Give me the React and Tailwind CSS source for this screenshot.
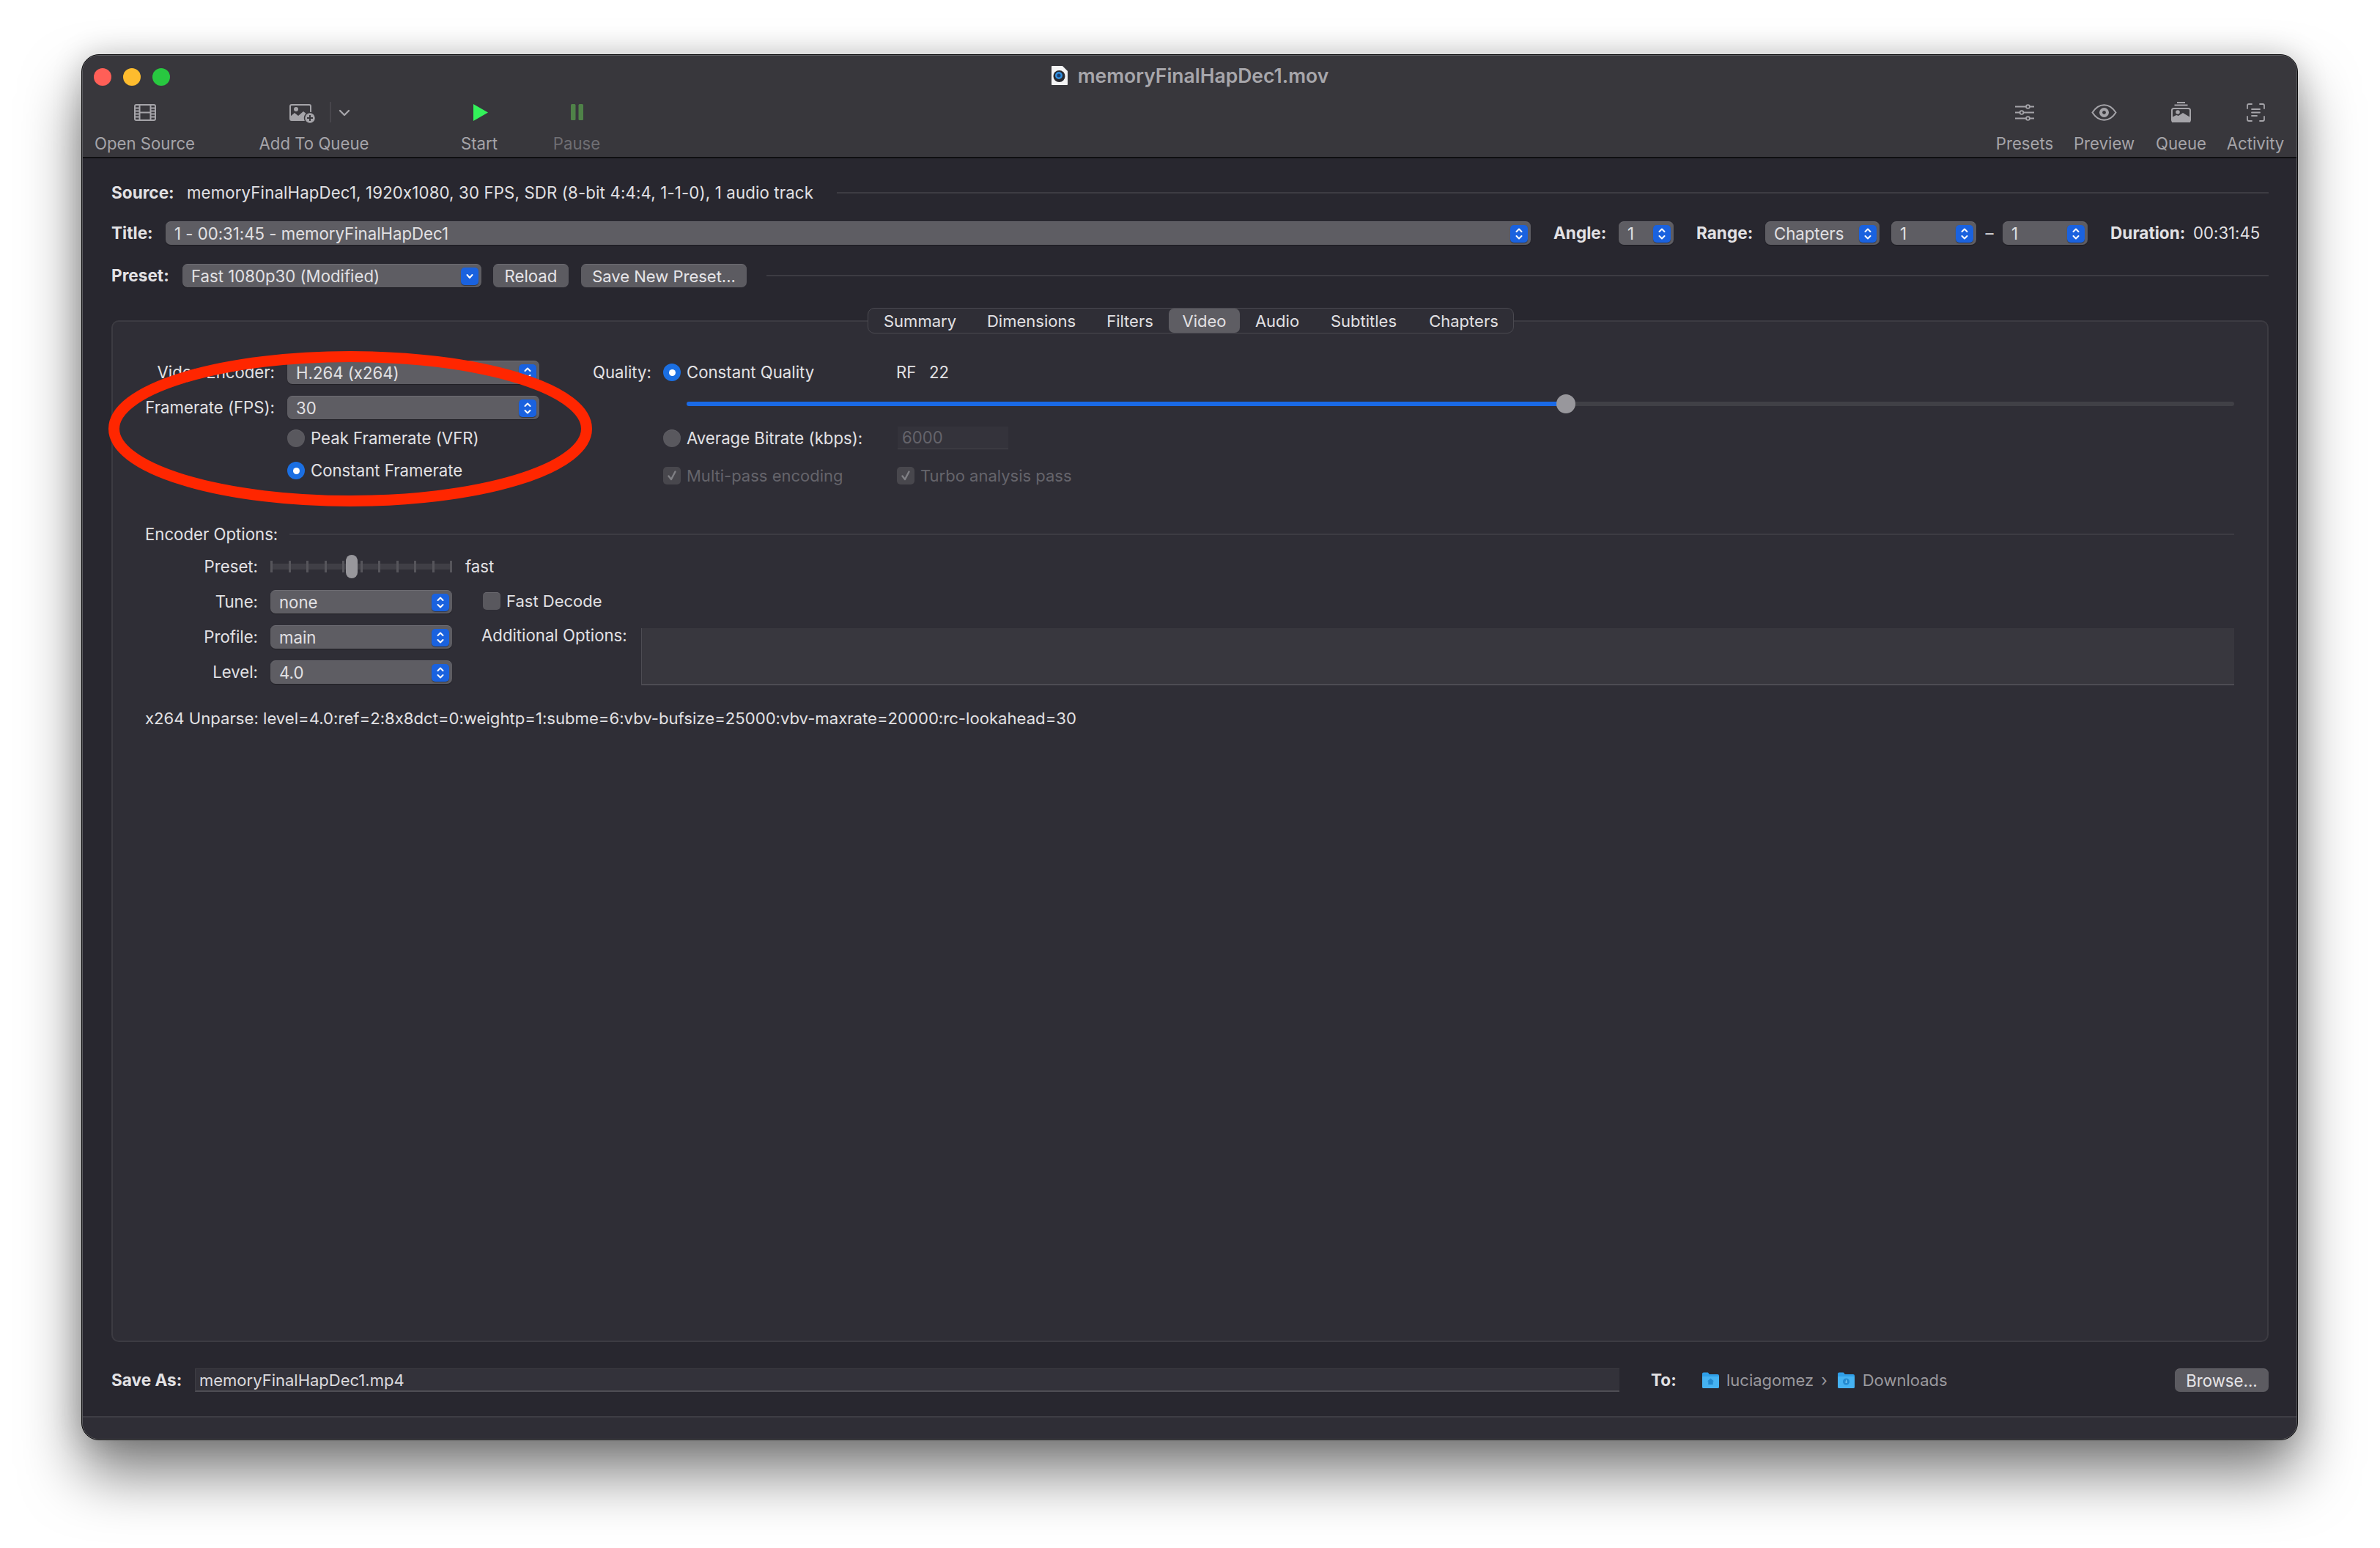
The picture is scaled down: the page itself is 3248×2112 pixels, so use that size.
const FONT = "font-['Inter','Liberation_Sans',sans-serif]";
const BOLD = 'font-bold text-[22.6px]';

const TABS = [
  { label: 'Summary', w: 'w-[141px]' },
  { label: 'Dimensions', w: 'w-[163px]' },
  { label: 'Filters', w: 'w-[106px]' },
  { label: 'Video', w: 'w-[97px]', active: true },
  { label: 'Audio', w: 'w-[102px]' },
  { label: 'Subtitles', w: 'w-[134px]' },
  { label: 'Chapters', w: 'w-[139px]' },
];

const TICKS = [0, 1, 2, 3, 4, 5, 6, 7, 8, 9, 10];

function UpDown() {
  return (
    <svg width="12" height="18" viewBox="0 0 12 18" fill="none" stroke="#fff" strokeWidth="2" strokeLinecap="round" strokeLinejoin="round">
      <path d="M2.5 6 6 2.5 9.5 6" />
      <path d="M2.5 12 6 15.5 9.5 12" />
    </svg>
  );
}

function Select({ text, className = '', single = false, textClass = '' }) {
  return (
    <div className={`h-[32px] flex items-center rounded-[7px] bg-[#5e5d63] border-t border-[#6d6c72] shadow-[0_1px_1px_rgba(0,0,0,0.3)] pl-[12px] pr-[4px] shrink-0 ${className}`}>
      <span className={`flex-1 text-[#e2e1e4] whitespace-nowrap ${textClass}`}>{text}</span>
      <div className="w-[24px] h-[24px] rounded-[5px] bg-[#1a62df] flex items-center justify-center shadow-[0_1px_1px_rgba(0,0,0,0.4)]">
        {single ? (
          <svg width="12" height="10" viewBox="0 0 12 10" fill="none" stroke="#fff" strokeWidth="2" strokeLinecap="round" strokeLinejoin="round">
            <path d="M2.5 3 6 7 9.5 3" />
          </svg>
        ) : <UpDown />}
      </div>
    </div>
  );
}

function Radio({ on }) {
  if (on) {
    return (
      <div className="w-[24px] h-[24px] rounded-full bg-[#1b6fe2] flex items-center justify-center shrink-0">
        <div className="w-[9px] h-[9px] rounded-full bg-white" />
      </div>
    );
  }
  return <div className="w-[24px] h-[24px] rounded-full bg-[#59585e] border-t border-[#6a696f] shrink-0" />;
}

function CheckOff() {
  return (
    <div className="w-[24px] h-[24px] rounded-[5px] bg-[#48474d] flex items-center justify-center shrink-0">
      <svg width="16" height="16" viewBox="0 0 16 16" fill="none" stroke="#808085" strokeWidth="2.4" strokeLinecap="round" strokeLinejoin="round">
        <path d="M3.5 8.5 7 13 12.5 2.5" />
      </svg>
    </div>
  );
}

function Button({ children, className = '' }) {
  return (
    <div className={`h-[32px] flex items-center justify-center rounded-[7px] bg-[#5c5b61] border-t border-[#6d6c72] text-[#e6e5e8] whitespace-nowrap shrink-0 ${className}`}>
      {children}
    </div>
  );
}

function ToolItem({ label, className = '', dim = false, children }) {
  return (
    <div className={`flex flex-col items-center shrink-0 ${className}`}>
      <div className="h-[30px] flex items-center justify-center">{children}</div>
      <span className={`mt-[15px] leading-[26px] whitespace-nowrap ${dim ? 'text-[#6f6e73]' : 'text-[#a5a4a9]'}`}>{label}</span>
    </div>
  );
}

function FolderIcon({ glyph }) {
  return (
    <svg width="25" height="24" viewBox="0 0 25 24" className="shrink-0">
      <path d="M1 3.5C1 2.4 1.8 1.5 3 1.5h5c1 0 1.5.5 2 1.5l.7 1H22c1.1 0 2 .9 2 2V21c0 1.1-.9 2-2 2H3c-1.1 0-2-.9-2-2Z" fill="#2f9fe8" />
      <path d="M1 7h23v14c0 1.1-.9 2-2 2H3c-1.1 0-2-.9-2-2Z" fill="#45b2f2" />
      {glyph === 'home' ? (
        <path d="M12.5 9.5 8 13.5h1.3V18h6.4v-4.5H17Z" fill="#2389cf" />
      ) : (
        <>
          <circle cx="12.5" cy="14" r="4.5" fill="#2389cf" />
          <path d="M12.5 11.5v4M10.8 14l1.7 1.8 1.7-1.8" fill="none" stroke="#7fd0fa" strokeWidth="1" />
        </>
      )}
    </svg>
  );
}

export default function App() {
  return (
    <div className={`relative w-[3248px] h-[2112px] bg-white pl-[111px] pt-[74px] text-[22.2px] leading-[26px] text-[#e2e1e4] [font-feature-settings:'calt'_0] ${FONT}`}>
      {/* Window */}
      <div className="w-[3025px] h-[1891px] rounded-[24px] border border-[#0b0b0c] bg-[#28272f] shadow-[0_46px_80px_rgba(0,0,0,0.5),0_0_40px_rgba(0,0,0,0.18)]">
        <div className="w-full h-full rounded-[23px] border border-[#5b5b5f] overflow-hidden flex flex-col">
          {/* Toolbar */}
          <div className="h-[140px] bg-[#38373c] border-b-2 border-[#0f0f11] shrink-0">
            <div className="h-[53px] flex items-center">
              <div className="w-[135px] flex items-center gap-[16px] pl-[15px] mt-[4px]">
                <div className="w-[24px] h-[24px] rounded-full bg-[#ff5f57]" />
                <div className="w-[24px] h-[24px] rounded-full bg-[#febc2e]" />
                <div className="w-[24px] h-[24px] rounded-full bg-[#28c840]" />
              </div>
              <div className="flex-1 flex items-center justify-center gap-[13px]">
                <svg width="24" height="28" viewBox="0 0 24 28">
                  <path d="M1 2c0-.6.4-1 1-1h14l7 7v18c0 .6-.4 1-1 1H2c-.6 0-1-.4-1-1Z" fill="#f4f4f5" />
                  <circle cx="11.5" cy="15" r="8" fill="#2a2a30" />
                  <circle cx="11" cy="14" r="5" fill="#2f8fe0" />
                  <circle cx="11" cy="14" r="2.5" fill="#1c3f70" />
                </svg>
                <span className="text-[26.5px] font-semibold text-[#a7a6ab] whitespace-nowrap">memoryFinalHapDec1.mov</span>
              </div>
              <div className="w-[135px]" />
            </div>
            <div className="flex pt-[9px] pr-[17px]">
              <ToolItem label="Open Source" className="w-[135px] ml-[17px]">
                <svg width="30" height="23" viewBox="0 0 30 23" fill="none" stroke="#a5a4a9" strokeWidth="2">
                  <rect x="1" y="1" width="28" height="21" rx="2" />
                  <path d="M7.5 1v21M22.5 1v21M7.5 11.5h15M1 5.5h6.5M1 9.5h6.5M1 13.5h6.5M1 17.5h6.5M22.5 5.5H29M22.5 9.5H29M22.5 13.5H29M22.5 17.5H29" />
                </svg>
              </ToolItem>
              <ToolItem label="Add To Queue" className="w-[147px] ml-[90px]">
                <svg width="96" height="30" viewBox="0 0 96 30" fill="none" className="ml-[29px]">
                  <rect x="1" y="5" width="28" height="21" rx="2" stroke="#a5a4a9" strokeWidth="2" />
                  <circle cx="9" cy="11" r="3" fill="#a5a4a9" />
                  <path d="M1 26v-5l6-5 5 4 7-6 10 8v4Z" fill="#a5a4a9" />
                  <circle cx="28" cy="23" r="7.5" fill="#a5a4a9" stroke="#38373c" strokeWidth="1.5" />
                  <path d="M28 19v8M24 23h8" stroke="#38373c" strokeWidth="2" />
                  <path d="M56 1v28" stroke="#4c4b50" strokeWidth="1.5" />
                  <path d="M69 13l6 6 6-6" stroke="#a5a4a9" strokeWidth="2.4" strokeLinecap="round" strokeLinejoin="round" />
                </svg>
              </ToolItem>
              <ToolItem label="Start" className="w-[50px] ml-[127px]">
                <svg width="20" height="23" viewBox="0 0 20 23" className="ml-[4px]"><path d="M0 0 20 11.5 0 23Z" fill="#33f25a" /></svg>
              </ToolItem>
              <ToolItem label="Pause" dim className="w-[62px] ml-[77px]">
                <svg width="17" height="22" viewBox="0 0 17 22" fill="#4f8248">
                  <rect x="0" y="0" width="6.5" height="22" rx="1.5" />
                  <rect x="10.5" y="0" width="6.5" height="22" rx="1.5" />
                </svg>
              </ToolItem>
              <ToolItem label="Presets" className="w-[78px] ml-auto">
                <svg width="26" height="23" viewBox="0 0 26 23" fill="#38373c" stroke="#a5a4a9" strokeWidth="1.8">
                  <path d="M0 3.5h26M0 11.5h26M0 19.5h26" />
                  <circle cx="17.5" cy="3.5" r="2.4" />
                  <circle cx="9" cy="11.5" r="2.4" />
                  <circle cx="17.5" cy="19.5" r="2.4" />
                </svg>
              </ToolItem>
              <ToolItem label="Preview" className="w-[81px] ml-[29px]">
                <svg width="35" height="23" viewBox="0 0 35 23" fill="none">
                  <path d="M1.5 11.5C6 4.5 11.5 1.2 17.5 1.2S29 4.5 33.5 11.5C29 18.5 23.5 21.8 17.5 21.8S6 18.5 1.5 11.5Z" stroke="#a5a4a9" strokeWidth="2" />
                  <circle cx="17.5" cy="11.5" r="6.5" fill="#a5a4a9" />
                  <circle cx="17.5" cy="11.5" r="2.4" fill="#38373c" />
                </svg>
              </ToolItem>
              <ToolItem label="Queue" className="w-[67px] ml-[31px]">
                <svg width="27" height="28" viewBox="0 0 27 28" fill="none">
                  <path d="M8 1h11M4.5 4.5h18" stroke="#a5a4a9" strokeWidth="1.8" />
                  <rect x="1" y="9" width="25" height="18" rx="2.5" stroke="#a5a4a9" strokeWidth="2" />
                  <circle cx="9" cy="14" r="2.8" fill="#a5a4a9" />
                  <path d="M1 28v-7l6-3 3 1 6-4 10 6v7Z" fill="#a5a4a9" />
                </svg>
              </ToolItem>
              <ToolItem label="Activity" className="w-[78px] ml-[29px]">
                <svg width="25" height="25" viewBox="0 0 25 25" fill="none" stroke="#a5a4a9" strokeWidth="1.8" strokeLinecap="round">
                  <path d="M1 7V3c0-1.1.9-2 2-2h4M18 1h4c1.1 0 2 .9 2 2v4M24 18v4c0 1.1-.9 2-2 2h-4M7 24H3c-1.1 0-2-.9-2-2v-4" />
                  <path d="M7 8h11M7 12.5h11M7 17h7" />
                </svg>
              </ToolItem>
            </div>
          </div>

          {/* Main */}
          <div className="flex-1 pl-[39px] pr-[38px] flex flex-col">
            <div className="mt-[31px] h-[32px] flex items-center shrink-0">
              <span className={`${BOLD} w-[103px] shrink-0`}>Source:</span>
              <span className="whitespace-nowrap tracking-[0.16px]">memoryFinalHapDec1, 1920x1080, 30 FPS, SDR (8-bit 4:4:4, 1-1-0), 1 audio track</span>
              <div className="flex-1 h-[2px] bg-[#3d3c43] ml-[32px]" />
            </div>

            <div className="mt-[23px] h-[32px] flex items-center shrink-0">
              <span className={`${BOLD} w-[74px] shrink-0`}>Title:</span>
              <Select text="1 - 00:31:45 - memoryFinalHapDec1" className="w-[1863px]" />
              <span className={`${BOLD} ml-[31px] w-[89px] shrink-0`}>Angle:</span>
              <Select text="1" className="w-[75px]" />
              <span className={`${BOLD} ml-[31px] w-[94px] shrink-0`}>Range:</span>
              <Select text="Chapters" className="w-[156px]" />
              <Select text="1" className="w-[116px] ml-[16px]" />
              <span className="w-[36px] text-center shrink-0">–</span>
              <Select text="1" className="w-[116px]" />
              <span className={`${BOLD} ml-[31px] w-[113px] shrink-0 whitespace-nowrap`}>Duration:</span>
              <span className="whitespace-nowrap">00:31:45</span>
            </div>

            <div className="mt-[26px] h-[32px] flex items-center shrink-0">
              <span className={`${BOLD} w-[97px] shrink-0`}>Preset:</span>
              <Select text="Fast 1080p30 (Modified)" single className="w-[408px]" />
              <Button className="w-[103px] ml-[16px]">Reload</Button>
              <Button className="w-[226px] ml-[17px] text-[22px]">Save New Preset...</Button>
              <div className="flex-1 h-[2px] bg-[#3d3c43] ml-[27px]" />
            </div>

            {/* Tab box */}
            <div className="mt-[45px] h-[1394px] shrink-0 rounded-[10px] border-2 border-[#3c3b42] bg-[#2f2e36]">
              <div className="-mt-[19px] ml-[1030px] w-[882px] h-[35px] flex items-center rounded-[9px] border border-[#4a4950] bg-[#2f2e36]">
                {TABS.map((t) => (
                  <div key={t.label} className={`${t.w} h-[33px] flex items-center justify-center shrink-0 text-[22px] ${t.active ? 'bg-[#5e5d63] rounded-[7px]' : ''}`}>
                    {t.label}
                  </div>
                ))}
              </div>

              <div className="ml-[44px] mr-[45px]">
                <div className="flex mt-[37px]">
                  {/* Video left */}
                  <div className="w-[538px] shrink-0 flex flex-col">
                    <div className="flex items-center">
                      <span className="w-[177px] text-right shrink-0 whitespace-nowrap">Video Encoder:</span>
                      <Select text="H.264 (x264)" className="w-[344px] ml-[17px]" />
                    </div>
                    <div className="flex items-center mt-[16px]">
                      <span className="w-[177px] text-right shrink-0 whitespace-nowrap">Framerate (FPS):</span>
                      <Select text="30" className="w-[344px] ml-[17px]" />
                    </div>
                    <div className="h-[24px] flex items-center gap-[8px] ml-[194px] mt-[14px]">
                      <Radio />
                      <span className="whitespace-nowrap">Peak Framerate (VFR)</span>
                    </div>
                    <div className="h-[24px] flex items-center gap-[8px] ml-[194px] mt-[20px]">
                      <Radio on />
                      <span className="whitespace-nowrap">Constant Framerate</span>
                    </div>
                  </div>
                  {/* Quality */}
                  <div className="flex-1 ml-[73px]">
                    <div className="h-[32px] flex items-center">
                      <span className="w-[79px] text-right shrink-0">Quality:</span>
                      <div className="ml-[17px]"><Radio on /></div>
                      <span className="ml-[8px] w-[286px] shrink-0">Constant Quality</span>
                      <span className="w-[45px] shrink-0">RF</span>
                      <span>22</span>
                    </div>
                    <div className="relative ml-[128px] mt-[14px] h-[26px] flex items-center">
                      <div className="w-[1200px] h-[6px] bg-[#1a6ae6] rounded-l-full" />
                      <div className="flex-1 h-[6px] bg-[#404046] rounded-r-full" />
                      <div className="absolute left-[1187px] top-0 w-[26px] h-[26px] rounded-full bg-[#98979c]" />
                    </div>
                    <div className="ml-[96px] mt-[18px] h-[31px] flex items-center">
                      <Radio />
                      <span className="ml-[8px] w-[288px] shrink-0 whitespace-nowrap">Average Bitrate (kbps):</span>
                      <div className="w-[151px] h-[31px] bg-[#34333b] border-b border-[#45444b] flex items-center pl-[6px] text-[#65646b]">6000</div>
                    </div>
                    <div className="ml-[96px] mt-[24px] h-[24px] flex items-center text-[#65646b] text-[22px]">
                      <CheckOff />
                      <span className="ml-[8px] w-[287px] shrink-0 whitespace-nowrap">Multi-pass encoding</span>
                      <CheckOff />
                      <span className="ml-[8px] whitespace-nowrap">Turbo analysis pass</span>
                    </div>
                  </div>
                </div>

                {/* Encoder options */}
                <div className="mt-[52px] h-[32px] flex items-center">
                  <span className="whitespace-nowrap">Encoder Options:</span>
                  <div className="flex-1 h-[2px] bg-[#3d3c43] ml-[16px]" />
                </div>
                <div className="flex mt-[12px] h-[176px]">
                  <div className="w-[419px] shrink-0 flex flex-col gap-[16px]">
                    <div className="h-[32px] flex items-center">
                      <span className="w-[154px] text-right shrink-0">Preset:</span>
                      <div className="relative ml-[17px] w-[248px] h-[32px] shrink-0 flex items-center">
                        <div className="absolute inset-x-0 h-[8px] bg-[#403f46]" />
                        <div className="relative w-full h-[16px] flex justify-between">
                          {TICKS.map((i) => <div key={i} className="w-[3px] h-[16px] bg-[#56555b]" />)}
                        </div>
                        <div className="absolute left-[103px] top-0 w-[16px] h-[32px] rounded-full bg-[#98979c]" />
                      </div>
                      <span className="ml-[18px]">fast</span>
                    </div>
                    <div className="flex items-center">
                      <span className="w-[154px] text-right shrink-0">Tune:</span>
                      <Select text="none" className="w-[248px] ml-[17px]" />
                    </div>
                    <div className="flex items-center">
                      <span className="w-[154px] text-right shrink-0">Profile:</span>
                      <Select text="main" className="w-[248px] ml-[17px]" />
                    </div>
                    <div className="flex items-center">
                      <span className="w-[154px] text-right shrink-0">Level:</span>
                      <Select text="4.0" className="w-[248px] ml-[17px]" />
                    </div>
                  </div>
                  <div className="flex-1 ml-[40px] flex flex-col">
                    <div className="h-[32px] mt-[50px] flex items-center pl-[2px] gap-[8px] text-[22px]">
                      <div className="w-[24px] h-[24px] rounded-[5px] bg-[#59585e] border-t border-[#6a696f]" />
                      <span>Fast Decode</span>
                    </div>
                    <div className="flex mt-[24px]">
                      <div className="w-[218px] h-[20px] flex items-center whitespace-nowrap shrink-0">Additional Options:</div>
                      <div className="flex-1 h-[78px] bg-[#38373e] border-l border-b-2 border-[#4d4c53]" />
                    </div>
                  </div>
                </div>
                <div className="mt-[35px] leading-[24px] whitespace-nowrap text-[22.13px]">x264 Unparse: level=4.0:ref=2:8x8dct=0:weightp=1:subme=6:vbv-bufsize=25000:vbv-maxrate=20000:rc-lookahead=30</div>
              </div>
            </div>

            {/* Save as */}
            <div className="mt-[36px] h-[32px] flex items-center shrink-0">
              <span className={`${BOLD} w-[114px] shrink-0`}>Save As:</span>
              <div className="w-[1944px] h-[32px] bg-[#33323a] border-t border-l border-[#3e3d44] border-b-2 border-b-[#4f4e55] flex items-center pl-[5px] text-[22px] text-[#dcdbde] shrink-0">memoryFinalHapDec1.mp4</div>
              <span className={`${BOLD} ml-[43px] w-[69px] shrink-0`}>To:</span>
              <FolderIcon glyph="home" />
              <span className="ml-[9px] text-[22px] text-[#9a999e] whitespace-nowrap">luciagomez</span>
              <span className="ml-[10px] text-[#9a999e]">›</span>
              <div className="ml-[13px]"><FolderIcon glyph="down" /></div>
              <span className="ml-[10px] text-[22px] text-[#9a999e] whitespace-nowrap">Downloads</span>
              <Button className="w-[128px] ml-auto">Browse...</Button>
            </div>
          </div>

          {/* Status bar */}
          <div className="h-[31px] shrink-0 bg-[#2f2e36] border-t-2 border-[#3e3d44]" />
        </div>
      </div>

      {/* Red annotation */}
      <svg className="absolute left-[140px] top-[470px]" width="680" height="230" viewBox="0 0 680 230" fill="none">
        <ellipse cx="338" cy="115" rx="322.5" ry="98.5" stroke="#ff2600" strokeWidth="15" />
      </svg>
    </div>
  );
}
